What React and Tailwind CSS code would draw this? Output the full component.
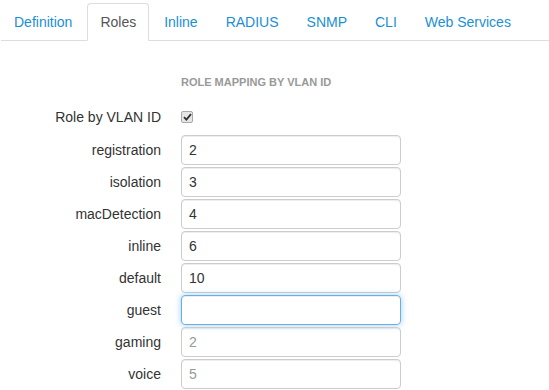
import React from "react";

const tabs = ["Definition", "Roles", "Inline", "RADIUS", "SNMP", "CLI", "Web Services"];

const rows = [
  { label: "registration", value: "2" },
  { label: "isolation", value: "3" },
  { label: "macDetection", value: "4" },
  { label: "inline", value: "6" },
  { label: "default", value: "10" },
  { label: "guest", value: "", focus: true },
  { label: "gaming", placeholder: "2" },
  { label: "voice", placeholder: "5" },
];

export default function App() {
  return (
    <div
      className="w-[549px] h-[390px] overflow-hidden bg-white text-[14px] text-[#333]"
      style={{ fontFamily: '"Liberation Sans", Arial, sans-serif' }}
    >
      <ul className="flex mt-[3px] ml-[1px] border-b border-[#ddd] leading-[20px]">
        {tabs.map((t) => {
          const active = t === "Roles";
          return (
            <li key={t} className="mr-[2px] -mb-px">
              <span
                className={
                  active
                    ? "block px-[12px] pt-[8px] pb-[8px] border border-[#ddd] border-b-white rounded-t-[4px] bg-white text-[#555]"
                    : "block px-[12px] pt-[8px] pb-[8px] border border-transparent text-[#1a8fd6]"
                }
              >
                {t}
              </span>
            </li>
          );
        })}
      </ul>

      <div className="pt-[35px]">
        <div className="pl-[181px] text-[11px] font-bold text-[#999] leading-[13px]">
          ROLE MAPPING BY VLAN ID
        </div>

        <div className="flex items-center mt-[18px] h-[20px]">
          <div className="w-[161px] text-right">Role by VLAN ID</div>
          <div className="ml-[20px] w-[12px] h-[12px] rounded-[2px] border border-[#a9a9a9] bg-[#e6e6e6] flex items-center justify-center">
            <svg width="9" height="8" viewBox="0 0 9 8">
              <path d="M1 4.2 L3.4 6.6 L8 1.2" stroke="#333" strokeWidth="1.8" fill="none" />
            </svg>
          </div>
        </div>

        <div className="mt-[8px] flex flex-col gap-[2px]">
          {rows.map((r) => (
            <div key={r.label} className="flex items-center h-[30px]">
              <div className="w-[161px] text-right">{r.label}</div>
              <input
                readOnly
                value={r.value ?? ""}
                placeholder={r.placeholder}
                className={
                  "ml-[20px] w-[220px] h-[30px] rounded-[4px] border px-[7px] text-[14px] text-[#333] placeholder:text-[#999] outline-none " +
                  (r.focus
                    ? "border-[#66afe9] shadow-[inset_0_1px_1px_rgba(0,0,0,0.075),0_0_6px_rgba(102,175,233,0.6)]"
                    : "border-[#ccc] shadow-[inset_0_1px_1px_rgba(0,0,0,0.075)]")
                }
                style={{ fontFamily: '"Liberation Sans", Arial, sans-serif' }}
              />
            </div>
          ))}
        </div>
      </div>
    </div>
  );
}
